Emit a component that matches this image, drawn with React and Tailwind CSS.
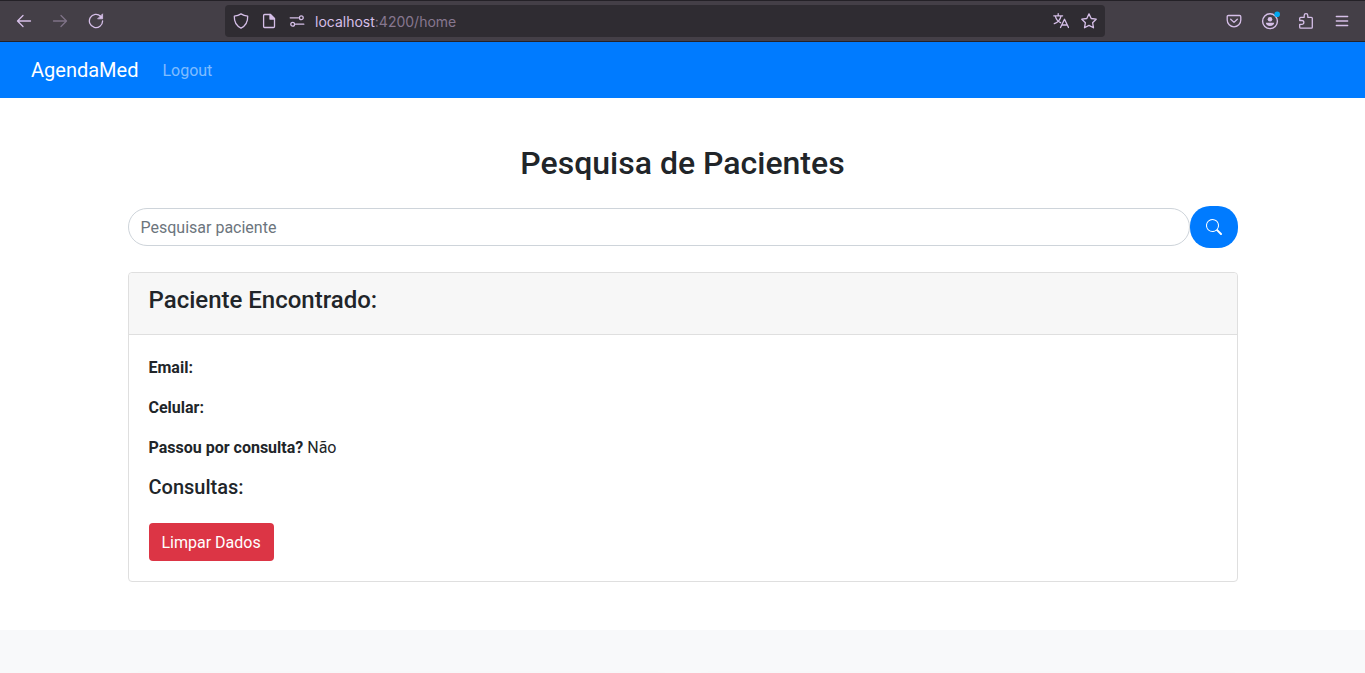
import React from 'react';

function Icon({ children, className = '' }) {
  return (
    <svg
      viewBox="0 0 16 16"
      className={`h-4 w-4 shrink-0 ${className}`}
      fill="none"
      stroke="currentColor"
      strokeWidth="1.3"
      strokeLinecap="round"
      strokeLinejoin="round"
      aria-hidden="true"
    >
      {children}
    </svg>
  );
}

function ToolButton({ label, children, disabled = false }) {
  return (
    <button
      type="button"
      aria-label={label}
      disabled={disabled}
      className="flex h-8 w-9 items-center justify-center disabled:opacity-40"
    >
      {children}
    </button>
  );
}

function UrlButton({ label, children }) {
  return (
    <button type="button" aria-label={label} className="flex h-7 w-7 items-center justify-center">
      {children}
    </button>
  );
}

function BrowserBar() {
  return (
    <header className="flex h-[42px] shrink-0 items-center border-y border-[#242127] bg-[#443f47] pr-[5px] pl-1.5 text-[#d6bfe8]">
      <div className="flex">
        <ToolButton label="Voltar">
          <Icon>
            <path d="M14.5 8H1.7M7 2.5 1.5 8 7 13.5" />
          </Icon>
        </ToolButton>
        <ToolButton label="Avançar" disabled>
          <Icon>
            <path d="M1.5 8h12.8M9 2.5 14.5 8 9 13.5" />
          </Icon>
        </ToolButton>
        <ToolButton label="Recarregar">
          <Icon>
            <path d="M12.6 3.2A6.6 6.6 0 1 0 14.6 8" />
            <path d="M14.6 1.2v4.6H10z" fill="currentColor" strokeWidth="0.8" />
          </Icon>
        </ToolButton>
      </div>
      <div className="flex h-8 min-w-0 flex-1 items-center rounded bg-[#2f2c32] mx-[111px] px-0.5">
        <UrlButton label="Proteção">
          <Icon>
            <path d="M8 .9C6.200 2.100 3.800 2.900 1.300 3.100c-.2 5.400 1.500 9.600 6.700 12 5.200-2.400 6.900-6.600 6.700-12C12.200 2.900 9.800 2.100 8 .9z" />
          </Icon>
        </UrlButton>
        <UrlButton label="Informações do site">
          <Icon>
            <path d="M3.600 1.500h5.900l4 4v8q0 1-1 1H3.600q-1 0-1-1v-11q0-1 1-1z" />
            <path d="M9 1.500v4.500h4.500z" fill="currentColor" />
          </Icon>
        </UrlButton>
        <UrlButton label="Permissões">
          <Icon>
            <path d="M1.200 4.800h8.200M6.600 11.200h8.200" />
            <circle cx="12.300" cy="4.800" r="1.900" />
            <circle cx="3.700" cy="11.200" r="1.900" />
          </Icon>
        </UrlButton>
        <span className="ml-1 flex-1 pt-0.5 font-['Inter',sans-serif] text-sm leading-5 text-[#87778f]">
          <span className="text-[#d6bfe8]">localhost</span>:4200/home
        </span>
        <UrlButton label="Traduzir página">
          <Icon>
            <path d="M.8 2.800h8.800M5.200 .7v2.100M2.300 3.100C3 5.800 5 8.500 7.600 9.700M8 3.100C7.300 6.300 4.800 9.400 1.300 10.700" />
            <path d="M7.500 14.500 11.500 6.300 15.500 14.500M8.900 12h5.200" />
          </Icon>
        </UrlButton>
        <UrlButton label="Adicionar aos favoritos">
          <Icon>
            <path d="m8 .9 2.200 4.600 5 .7-3.600 3.500.9 5.100L8 12.400l-4.500 2.400.9-5.100L.8 6.200l5-.7z" />
          </Icon>
        </UrlButton>
      </div>
      <div className="flex">
        <ToolButton label="Salvar no Pocket">
          <Icon>
            <path d="M2.400 2.500h11.200q1.200 0 1.200 1.200V7a6.800 6.800 0 0 1-13.600 0V3.700q0-1.200 1.200-1.200z" />
            <path d="M4.700 6.300 8 9.400l3.300-3.100" />
          </Icon>
        </ToolButton>
        <ToolButton label="Conta">
          <svg viewBox="0 0 20 20" className="h-5 w-5" aria-hidden="true">
            <circle cx="10" cy="10.200" r="7.400" fill="none" stroke="currentColor" strokeWidth="1.400" />
            <circle cx="10" cy="8.200" r="2.300" fill="currentColor" />
            <path d="M5.800 11.700h8.400c0 1.800-1.800 3.200-4.200 3.200s-4.200-1.400-4.200-3.200z" fill="currentColor" />
            <circle cx="17.200" cy="3.200" r="2.800" fill="#00a8f0" />
          </svg>
        </ToolButton>
        <ToolButton label="Extensões">
          <Icon>
            <path d="M1.700 7.500V5.300q0-1 1-1H6.200V2.500a1.800 1.800 0 0 1 3.600 0v1.800h3.500q1 0 1 1v8.900q0 1-1 1H2.700q-1 0-1-1v-2.800h2.200a1.900 1.900 0 0 0 0-3.900z" />
          </Icon>
        </ToolButton>
        <ToolButton label="Menu">
          <Icon>
            <path d="M2.300 3.500h11.400M2.300 8h11.400M2.300 12.500h11.400" />
          </Icon>
        </ToolButton>
      </div>
    </header>
  );
}

function Navbar() {
  return (
    <nav className="flex h-14 items-center gap-6 bg-[#007bff] px-[31px]">
      <a href="#home" className="text-xl leading-8 text-white">
        AgendaMed
      </a>
      <a href="#logout" className="pt-0.5 text-base leading-6 text-white/50">
        Logout
      </a>
    </nav>
  );
}

function SearchForm() {
  return (
    <form className="mb-6 flex items-center" onSubmit={(e) => e.preventDefault()}>
      <input
        type="text"
        aria-label="Pesquisar paciente"
        placeholder="Pesquisar paciente"
        className="h-[38px] min-w-0 flex-1 rounded-full border border-[#ced4da] bg-white px-3 text-base text-[#495057] placeholder:text-[#6c757d] placeholder:opacity-100"
      />
      <button
        type="submit"
        aria-label="Pesquisar"
        className="flex h-[42px] w-12 items-center justify-center rounded-[20px] bg-[#007bff] text-white"
      >
        <svg viewBox="0 0 16 16" className="h-4 w-4" fill="currentColor" aria-hidden="true">
          <path d="M11.742 10.344a6.500 6.500 0 1 0-1.397 1.398h-.001c.03.04.062.078.098.115l3.850 3.850a1 1 0 0 0 1.415-1.414l-3.850-3.850a1.007 1.007 0 0 0-.115-.1zM12 6.500a5.500 5.500 0 1 1-11 0 5.500 5.500 0 0 1 11 0z" />
        </svg>
      </button>
    </form>
  );
}

function PatientCard() {
  return (
    <section className="rounded border border-[#dfdfdf] bg-white">
      <div className="rounded-t border-b border-[#dfdfdf] bg-[#f7f7f7] px-5 pt-3 pb-[18px]">
        <h3 className="text-2xl leading-[31px] font-medium">Paciente Encontrado:</h3>
      </div>
      <div className="p-5">
        <div className="flex flex-col gap-3.5">
          <p className="leading-[26px]">
            <strong className="font-bold">Email:</strong>
          </p>
          <p className="leading-[26px]">
            <strong className="font-bold">Celular:</strong>
          </p>
          <p className="leading-[26px]">
            <strong className="font-bold">Passou por consulta?</strong> Não
          </p>
          <h5 className="mb-6 text-xl leading-6 font-medium">Consultas:</h5>
        </div>
        <button
          type="button"
          className="block h-[38px] rounded bg-[#dc3545] px-[13px] pt-0.5 text-base leading-6 text-white"
        >
          Limpar Dados
        </button>
      </div>
    </section>
  );
}

function InfoSection() {
  return (
    <section className="bg-[#f8f9fa] py-12">
      <div className="mx-auto grid max-w-[1140px] grid-cols-2 gap-[30px] px-[15px]">
        <div className="h-40 rounded bg-white shadow-[0_8px_16px_rgba(0,0,0,0.15)]" />
        <div className="h-40 rounded bg-white shadow-[0_8px_16px_rgba(0,0,0,0.15)]" />
      </div>
    </section>
  );
}

export default function App() {
  return (
    <div className="flex h-screen flex-col overflow-hidden bg-white">
      <BrowserBar />
      <div className="min-h-0 flex-1 overflow-y-auto font-['Roboto',sans-serif] text-base leading-6 text-[#212529] [scrollbar-width:none]">
        <Navbar />
        <main className="mx-auto max-w-[1140px] px-[15px] py-12">
          <h2 className="mb-[26px] text-center text-[32px] leading-[34px] font-medium">
            Pesquisa de Pacientes
          </h2>
          <SearchForm />
          <PatientCard />
        </main>
        <InfoSection />
      </div>
    </div>
  );
}
